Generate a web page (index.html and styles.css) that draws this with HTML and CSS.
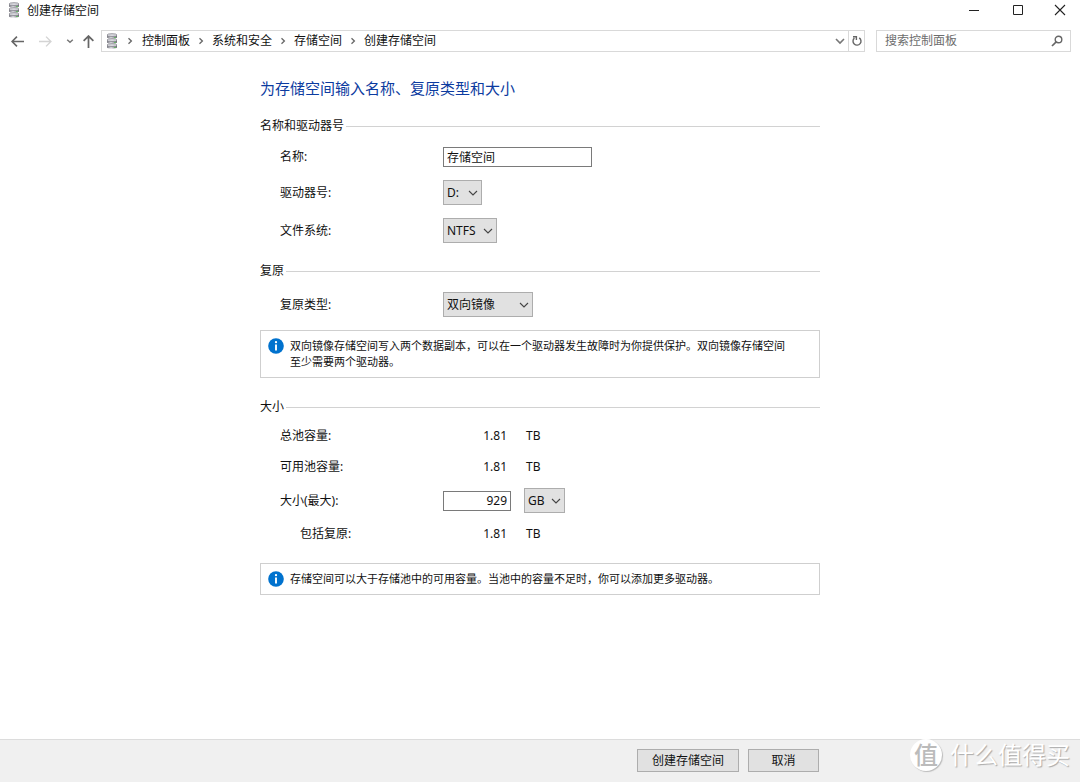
FILE: index.html
```html
<!DOCTYPE html>
<html lang="zh-CN">
<head>
<meta charset="utf-8">
<meta name="viewport" content="width=device-width, initial-scale=1">
<title>创建存储空间</title>
<link rel="stylesheet" href="styles.css">
</head>
<body>
<svg class="defs" aria-hidden="true">
  <defs>
    <linearGradient id="metal" x1="0" x2="1" y1="0" y2="0">
      <stop offset="0" stop-color="#77777f"/>
      <stop offset="0.4" stop-color="#d6d6dc"/>
      <stop offset="1" stop-color="#6c6c74"/>
    </linearGradient>
    <symbol id="disks" viewBox="0 0 12 16">
      <g fill="url(#metal)">
        <path d="M1 2.5v2c0 1.3 10 1.3 10 0v-2z"/>
        <path d="M1 7.5v2c0 1.3 10 1.3 10 0v-2z"/>
        <path d="M1 12.5v2c0 1.4 10 1.4 10 0v-2z"/>
      </g>
      <g fill="#dcdce2" stroke="#85858d" stroke-width="0.8">
        <ellipse cx="6" cy="2.1" rx="5" ry="1.4"/>
        <ellipse cx="6" cy="7.1" rx="5" ry="1.4"/>
        <ellipse cx="6" cy="12.1" rx="5" ry="1.4"/>
      </g>
      <path d="M8 4.6h2M8 9.6h2M8 14.5h2" stroke="#62b562" stroke-width="1"/>
    </symbol>
    <symbol id="sep" viewBox="0 0 8 8"><path d="M2.5 1.2L5.4 4 2.5 6.8" fill="none" stroke="#666" stroke-width="1.3"/></symbol>
    <symbol id="down" viewBox="0 0 10 10"><path d="M1 3l4 4 4-4" fill="none" stroke="currentColor" stroke-width="1.1"/></symbol>
    <symbol id="info" viewBox="0 0 16 16">
      <circle cx="8" cy="8" r="7.8" fill="#0072ce"/>
      <path d="M8 6.5v6" stroke="#fff" stroke-width="1.9"/>
      <circle cx="8" cy="4.2" r="1.15" fill="#fff"/>
    </symbol>
  </defs>
</svg>

<header class="titlebar">
  <svg class="disks"><use href="#disks"/></svg>
  <h1 class="window-title">创建存储空间</h1>
  <div class="window-controls">
    <button type="button" aria-label="最小化"><svg viewBox="0 0 12 12"><path d="M1 6.5h10" stroke="#222"/></svg></button>
    <button type="button" aria-label="最大化"><svg viewBox="0 0 12 12"><path d="M1.5 1.5h9v9h-9z" fill="none" stroke="#222"/></svg></button>
    <button type="button" aria-label="关闭"><svg viewBox="0 0 12 12"><path d="M1 1l10 10M11 1L1 11" stroke="#222" stroke-width="1.1"/></svg></button>
  </div>
</header>

<nav class="toolbar">
  <div class="history">
    <button type="button" aria-label="后退"><svg viewBox="0 0 12 12"><path d="M12 6H1M5.5 1.5L1 6l4.5 4.5" fill="none" stroke="#666" stroke-width="1.5"/></svg></button>
    <button type="button" aria-label="前进" disabled><svg viewBox="0 0 12 12"><path d="M0 6h11M6.5 1.5L11 6l-4.5 4.5" fill="none" stroke="#d4d4d4" stroke-width="1.3"/></svg></button>
    <button type="button" class="recent" aria-label="最近位置"><svg viewBox="0 0 8 8"><path d="M1.2 2.8L4 5.3 6.8 2.8" fill="none" stroke="#777" stroke-width="1.5"/></svg></button>
    <button type="button" class="up" aria-label="向上"><svg viewBox="0 0 12 12"><path d="M6 12V1M1.5 5.5L6 1l4.5 4.5" fill="none" stroke="#666" stroke-width="1.6"/></svg></button>
  </div>
  <div class="address">
    <svg class="disks"><use href="#disks"/></svg>
    <ol class="crumbs">
      <li><svg><use href="#sep"/></svg><a href="#">控制面板</a></li>
      <li><svg><use href="#sep"/></svg><a href="#">系统和安全</a></li>
      <li><svg><use href="#sep"/></svg><a href="#">存储空间</a></li>
      <li><svg><use href="#sep"/></svg><a href="#">创建存储空间</a></li>
    </ol>
    <button type="button" class="drop" aria-label="以前的位置"><svg viewBox="0 0 10 10"><path d="M1 3l4 4 4-4" fill="none" stroke="#777" stroke-width="1.6"/></svg></button>
    <button type="button" class="refresh" aria-label="刷新"><svg viewBox="0 0 12 12"><path d="M8.2 2.8A4 4 0 1 1 3.4 3.1M2 1.7h3.4v3.4" fill="none" stroke="#666" stroke-width="1.4"/></svg></button>
  </div>
  <form class="search">
    <input type="search" aria-label="搜索控制面板" placeholder="搜索控制面板">
    <button type="button" aria-label="搜索"><svg viewBox="0 0 12 12"><circle cx="7.5" cy="4.5" r="3.3" fill="none" stroke="#666" stroke-width="1.4"/><path d="M5.2 6.9L1 11" stroke="#666" stroke-width="1.7"/></svg></button>
  </form>
</nav>

<form class="page" id="space">
  <main class="content">
    <h2 class="heading">为存储空间输入名称、复原类型和大小</h2>

    <section class="group">
      <h3 class="legend">名称和驱动器号</h3>
      <div class="row"><label for="name">名称:</label><input class="field name" id="name" type="text" value="存储空间"></div>
      <div class="row"><label for="drive">驱动器号:</label><span class="combo drive"><select id="drive"><option>D:</option></select><svg><use href="#down"/></svg></span></div>
      <div class="row"><label for="fs">文件系统:</label><span class="combo fs"><select id="fs"><option>NTFS</option></select><svg><use href="#down"/></svg></span></div>
    </section>

    <section class="group">
      <h3 class="legend">复原</h3>
      <div class="row"><label for="type">复原类型:</label><span class="combo type"><select id="type"><option>双向镜像</option></select><svg><use href="#down"/></svg></span></div>
      <div class="note"><svg><use href="#info"/></svg><p>双向镜像存储空间写入两个数据副本，可以在一个驱动器发生故障时为你提供保护。双向镜像存储空间至少需要两个驱动器。</p></div>
    </section>

    <section class="group sizes">
      <h3 class="legend">大小</h3>
      <div class="row"><span>总池容量:</span><span class="amount">1.81</span><span class="unit">TB</span></div>
      <div class="row"><span>可用池容量:</span><span class="amount">1.81</span><span class="unit">TB</span></div>
      <div class="row"><label for="size">大小(最大):</label><input class="field size" id="size" type="text" value="929"><span class="combo gb"><select aria-label="单位"><option>GB</option></select><svg><use href="#down"/></svg></span></div>
      <div class="row"><span class="nested">包括复原:</span><span class="amount">1.81</span><span class="unit">TB</span></div>
      <div class="note"><svg><use href="#info"/></svg><p>存储空间可以大于存储池中的可用容量。当池中的容量不足时，你可以添加更多驱动器。</p></div>
    </section>
  </main>
</form>

<footer class="footer">
  <div class="actions">
    <button type="submit" form="space" class="create">创建存储空间</button>
    <button type="button" class="cancel">取消</button>
  </div>
  <div class="watermark"><span class="seal">值</span><span>什么值得买</span></div>
</footer>
</body>
</html>
```

FILE: styles.css
```css
* {
  box-sizing: border-box;
}

body {
  margin: 0;
  min-height: 100vh;
  display: flex;
  flex-direction: column;
  background: #fff;
  color: #111;
  font: 12px/16px "Noto Sans", "Noto Sans CJK SC", sans-serif;
}

h1, h2, h3, p, ol {
  margin: 0;
  padding: 0;
  font-size: inherit;
  font-weight: 400;
}

button, input, select {
  font: inherit;
  color: inherit;
  margin: 0;
}

button {
  padding: 0;
  border: 0;
  background: none;
}

svg {
  display: block;
  flex: none;
}

.defs {
  position: absolute;
  width: 0;
  height: 0;
}

.disks {
  width: 12px;
  height: 16px;
}

/* Title bar */
.titlebar {
  display: flex;
  align-items: center;
  gap: 7px;
  height: 20px;
  padding-left: 8px;
}

.window-title {
  padding-top: 1px;
}

.window-controls {
  display: flex;
  margin-left: auto;
}

.window-controls button {
  display: grid;
  place-items: center;
  width: 44px;
  height: 20px;
}

.window-controls button:last-child {
  width: 40px;
}

.window-controls svg {
  width: 12px;
  height: 12px;
}

/* Navigation */
.toolbar {
  display: flex;
  align-items: center;
  padding: 10px 9px 10px 11px;
}

.history {
  display: flex;
  align-items: center;
  width: 90px;
}

.history button {
  width: 28px;
}

.history svg {
  width: 13px;
  height: 13px;
}

.history .recent {
  width: 15px;
}

.history .recent svg {
  width: 8px;
  height: 8px;
  margin-left: -1px;
}

.history .up {
  width: 19px;
}

.address, .search {
  display: flex;
  align-items: center;
  height: 22px;
  border: 1px solid #d9d9d9;
}

.address {
  flex: 1;
  padding-left: 4px;
}

.crumbs {
  display: flex;
  list-style: none;
  margin-right: auto;
}

.crumbs li {
  display: flex;
  align-items: center;
}

.crumbs svg {
  width: 8px;
  height: 8px;
  margin: 0 7px;
}

.crumbs li:first-child svg {
  margin: 0 8px;
}

.crumbs a {
  color: inherit;
  text-decoration: none;
}

.address button {
  display: grid;
  place-items: center;
  width: 16px;
  height: 20px;
}

.drop svg {
  width: 10px;
  height: 10px;
}

.address .refresh {
  border-left: 1px solid #d9d9d9;
}

.refresh svg {
  width: 12px;
  height: 12px;
}

.search {
  width: 195px;
  margin-left: 11px;
  padding: 0 7px 0 8px;
}

.search input {
  flex: 1;
  min-width: 0;
  padding: 0;
  border: 0;
  background: none;
}

.search input::placeholder {
  color: #6d6d6d;
}

.search svg {
  width: 12px;
  height: 12px;
}

/* Form */
.page {
  flex: 1;
  padding: 16px 20px;
}

.content {
  max-width: 560px;
  margin: 0 auto;
}

.heading {
  color: #0c3ba0;
  font-size: 15px;
  line-height: 20px;
  margin-bottom: 20px;
}

.group {
  display: flex;
  flex-direction: column;
  gap: 13px;
  margin-bottom: 20px;
}

.sizes {
  gap: 11px;
  padding-top: 1px;
}

.legend {
  display: flex;
  align-items: center;
  gap: 2px;
}

.legend::after {
  content: "";
  flex: 1;
  height: 1px;
  background: #d2d2d2;
}

.row {
  display: grid;
  grid-template-columns: 163px 68px 1fr;
  align-items: center;
  min-height: 20px;
  padding-left: 20px;
}

.nested {
  padding-left: 20px;
}

.field {
  height: 20px;
  padding: 0 3px;
  border: 1px solid #7a7a7a;
  background: #fff;
}

.name {
  grid-column: 2 / 4;
  width: 149px;
}

.size {
  width: 68px;
  text-align: right;
}

.amount {
  padding-right: 4px;
  text-align: right;
}

.unit {
  padding-left: 15px;
}

.combo {
  grid-column: 2 / 4;
  position: relative;
  height: 25px;
}

.combo select {
  appearance: none;
  width: 100%;
  height: 25px;
  padding: 0 3px;
  border: 1px solid #adadad;
  border-radius: 0;
  background: #e1e1e1;
}

.combo svg {
  position: absolute;
  right: 4px;
  top: 8px;
  width: 10px;
  height: 10px;
  color: #444;
  pointer-events: none;
}

.drive {
  width: 39px;
}

.fs {
  width: 54px;
}

.type {
  width: 90px;
}

.gb {
  grid-column: 3;
  width: 41px;
  margin-left: 13px;
}

.note {
  display: flex;
  gap: 6px;
  padding: 7px 24px 7px 7px;
  border: 1px solid #cfcfcf;
  font-size: 11px;
}

.note svg {
  width: 16px;
  height: 16px;
}

.sizes .note {
  margin-top: 8px;
}

/* Footer */
.footer {
  position: relative;
  padding: 9px 20px 10px;
  border-top: 1px solid #dcdcdc;
  background: #f0f0f0;
}

.actions {
  display: flex;
  justify-content: flex-end;
  gap: 9px;
  max-width: 558px;
  margin: 0 auto;
}

.actions button {
  height: 23px;
  border: 1px solid #adadad;
  background: #e1e1e1;
}

.actions .create {
  width: 102px;
}

.actions .cancel {
  width: 71px;
}

.watermark {
  position: absolute;
  right: 10px;
  top: -1px;
  display: flex;
  align-items: center;
  gap: 8px;
  color: #fff;
  font-size: 24px;
  line-height: 32px;
  text-shadow: 1px 1px 1px #aaa;
}

.seal {
  width: 32px;
  height: 32px;
  border-radius: 50%;
  background: #fff;
  box-shadow: 1px 1px 1px #bbb;
  color: #bbb;
  font-weight: 500;
  text-align: center;
  text-shadow: none;
}
```
